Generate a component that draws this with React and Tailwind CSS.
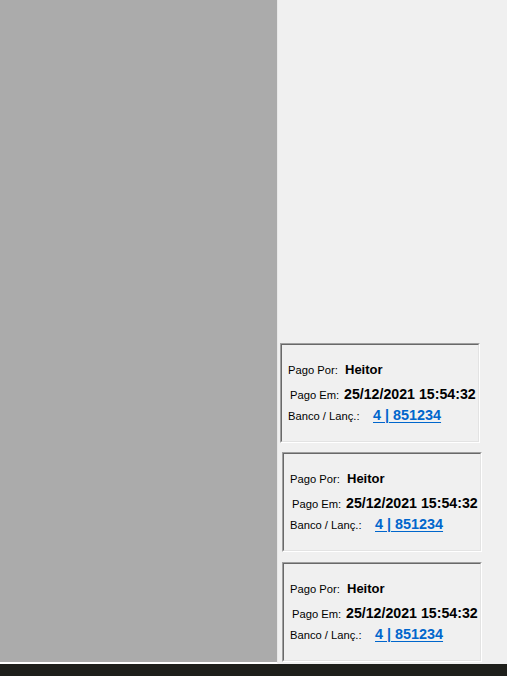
const pagamentos = [
  { por: "Heitor", em: "25/12/2021 15:54:32", banco: "4 | 851234", shift: "ml-[2px]", gap: "" },
  { por: "Heitor", em: "25/12/2021 15:54:32", banco: "4 | 851234", shift: "ml-[4px]", gap: "mt-[9px]" },
  { por: "Heitor", em: "25/12/2021 15:54:32", banco: "4 | 851234", shift: "ml-[4px]", gap: "mt-[10px]" },
];

// painel com borda 3D estilo WinForms (Fixed3D)
function PagamentoBox({ item }) {
  return (
    <div
      className={`${item.shift} ${item.gap} h-[100px] w-[200px] border-l border-t border-b border-r border-l-[#a0a0a0] border-t-[#a0a0a0] border-b-white border-r-white`}
    >
      <div className="h-full w-full border-l border-t border-b border-r border-l-[#696969] border-t-[#696969] border-b-[#e3e3e3] border-r-[#e3e3e3] bg-[#f0f0f0] pt-[14px] text-black">
        <div className="flex h-[24px] items-baseline leading-[22px]">
          <span className="ml-[6px] inline-block w-[57px] text-[11.2px]">Pago Por:</span>
          <span className="text-[13px] font-bold">{item.por}</span>
        </div>
        <div className="flex h-[21px] items-baseline leading-[22px]">
          <span className="ml-[8px] inline-block w-[54px] text-[11.2px]">Pago Em:</span>
          <span className="text-[14.2px] font-bold">{item.em}</span>
        </div>
        <div className="flex h-[22px] items-baseline leading-[22px]">
          <span className="ml-[6px] inline-block w-[85px] text-[11.2px]">Banco / Lanç.:</span>
          <a href="#" className="text-[14.4px] font-bold text-[#0066cc] underline underline-offset-2">
            {item.banco}
          </a>
        </div>
      </div>
    </div>
  );
}

export default function App() {
  return (
    <div
      className="flex h-[676px] w-[507px] flex-col overflow-hidden bg-[#f0f0f0]"
      style={{ fontFamily: '"Liberation Sans", Arial, sans-serif' }}
    >
      <div className="flex h-[664px]">
        <div className="h-[664px] w-[278px] border-b-2 border-r border-b-white border-r-[#e8e8e8] bg-[#ababab]" />
        <div className="flex flex-1 flex-col pt-[343px]">
          {pagamentos.map((item, i) => (
            <PagamentoBox key={i} item={item} />
          ))}
        </div>
      </div>
      <div className="h-[12px] bg-[#1e1f1b]" />
    </div>
  );
}
